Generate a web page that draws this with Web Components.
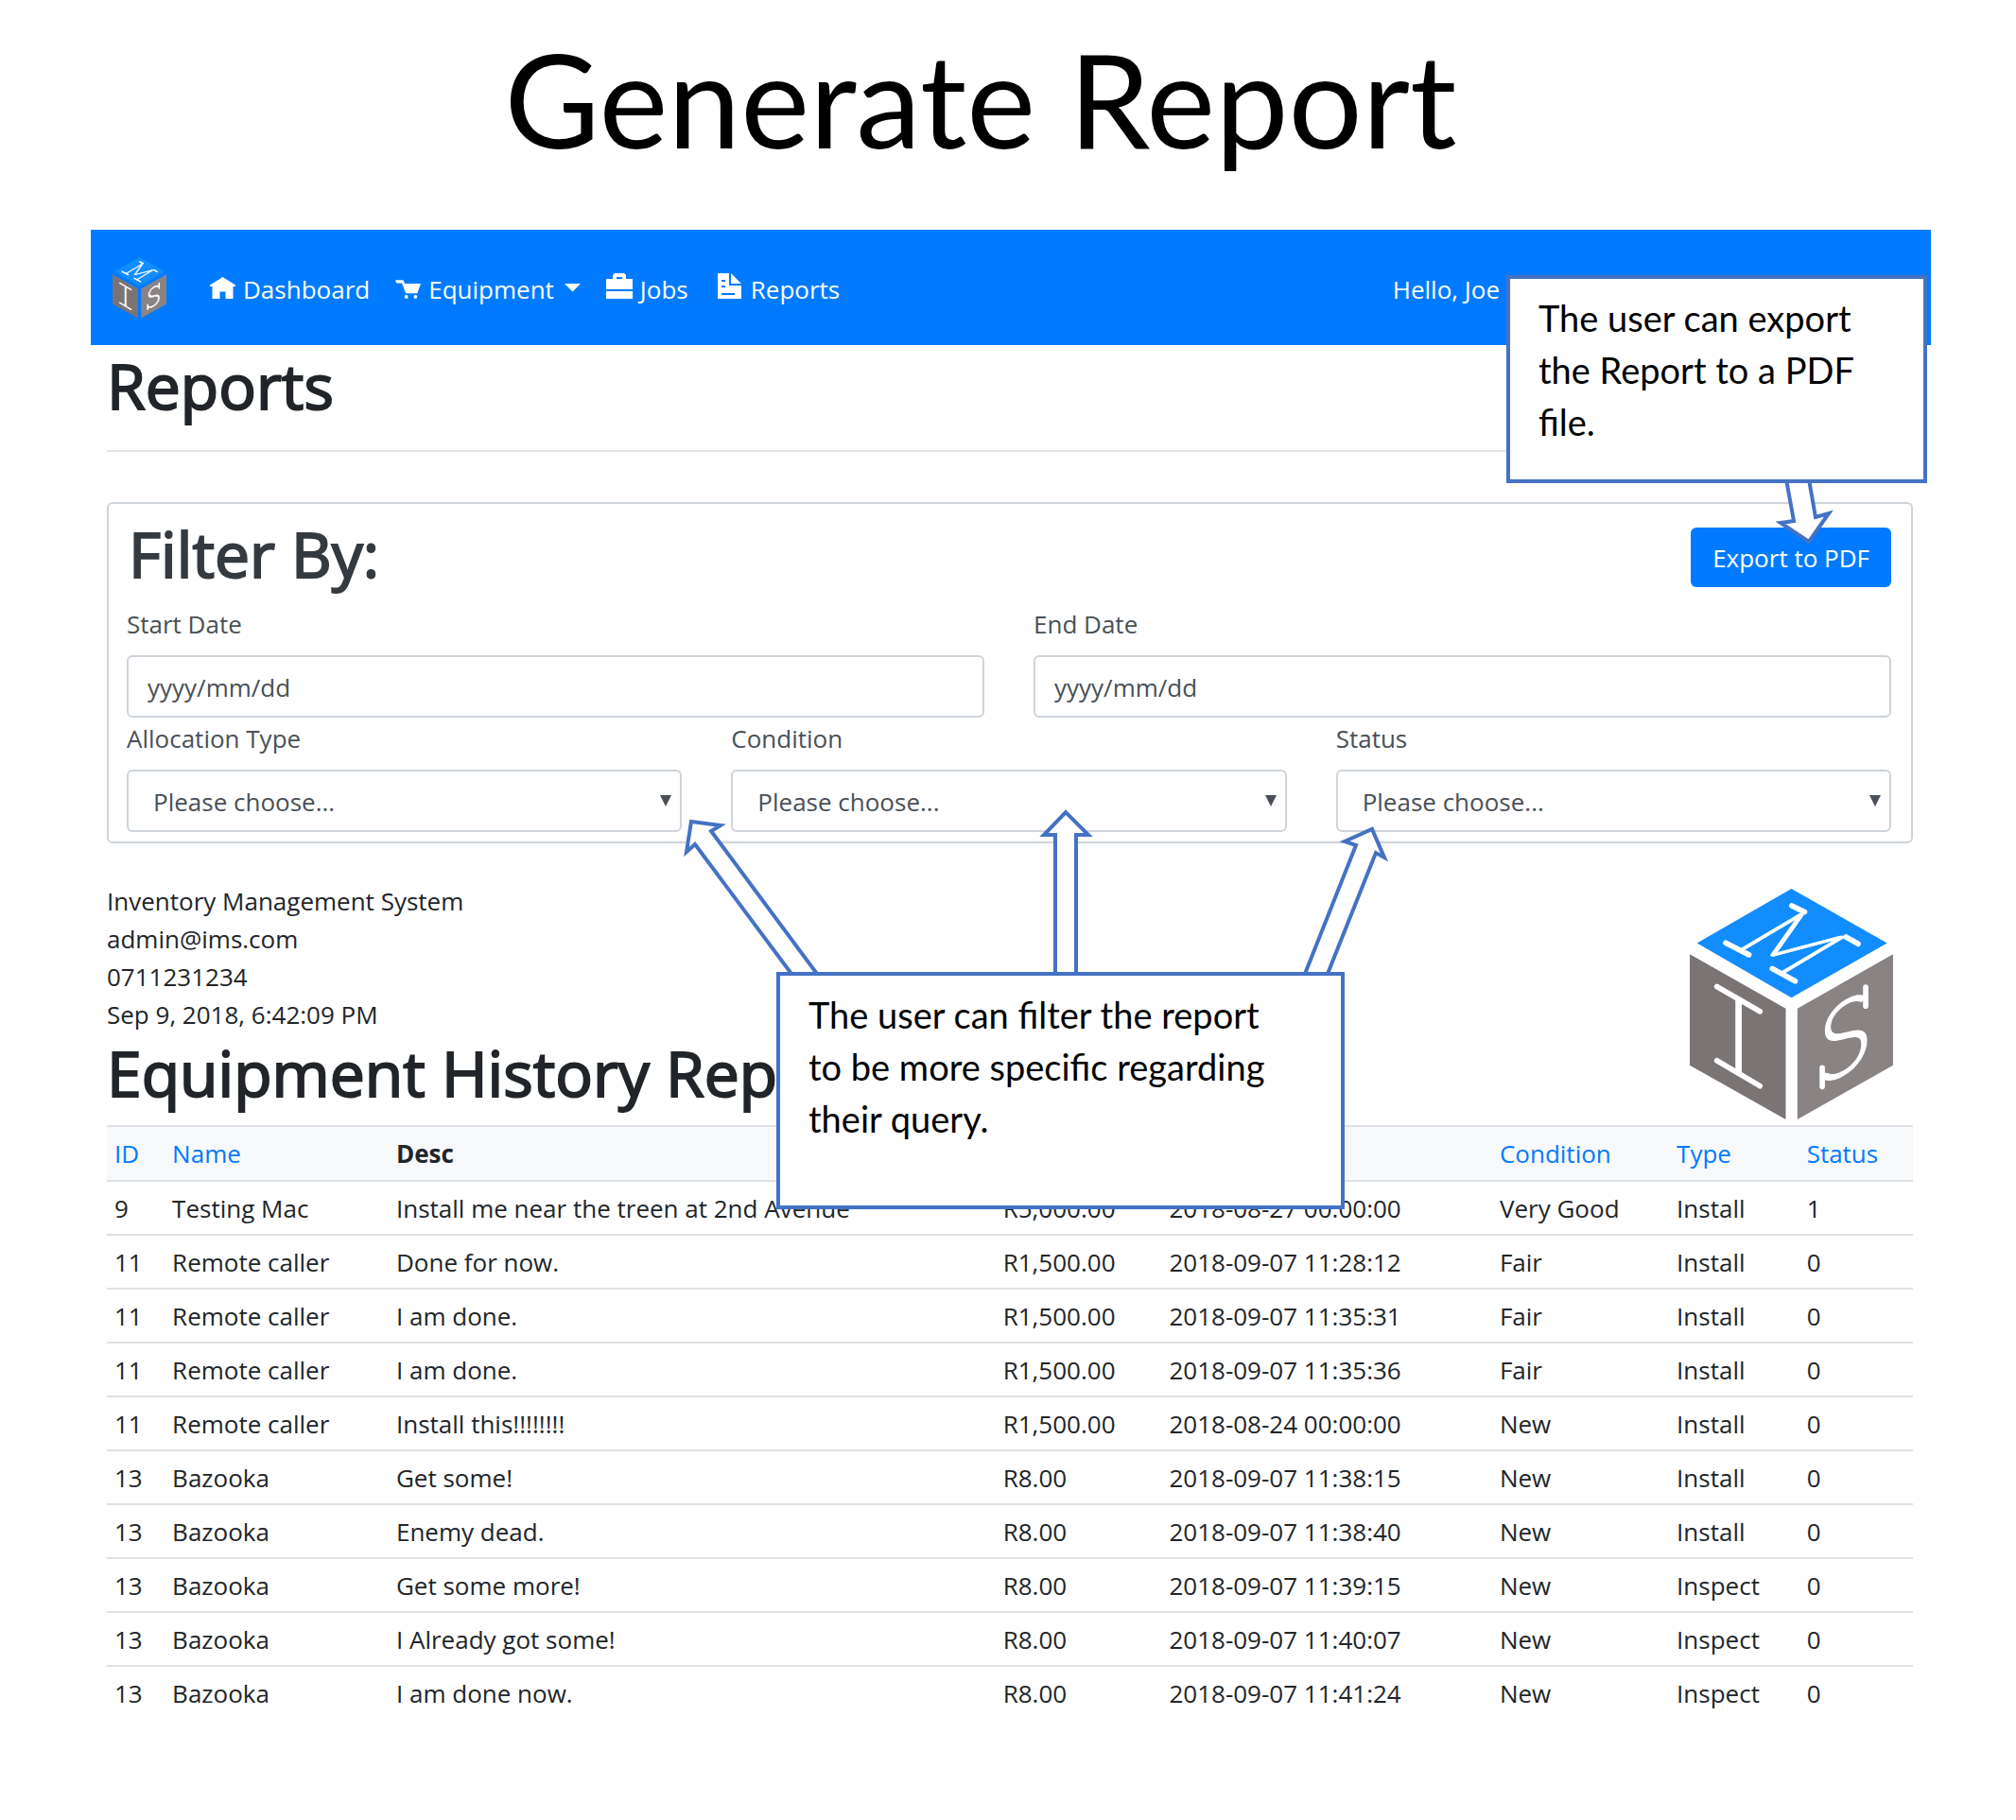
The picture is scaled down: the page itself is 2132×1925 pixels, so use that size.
<!DOCTYPE html>
<html lang="en">
<head>
<meta charset="utf-8">
<title>Generate Report</title>
<style>
  html { --blue: #007bff; --line: #dee2e6; --field: #ced4da; --note: #4472c4; }
  body { margin: 0; background: #fff; color: #212529; font: 400 26px/40px "Open Sans", "Noto Sans", sans-serif; }
</style>
</head>
<body>
<report-page></report-page>
<script>
const define = (name, html, setup) => {
  const template = document.createElement('template');
  template.innerHTML = '<style>*,*::before,*::after{box-sizing:border-box}</style>' + html;
  customElements.define(name, class extends HTMLElement {
    constructor() {
      super();
      this.attachShadow({ mode: 'open' }).append(template.content.cloneNode(true));
    }
    connectedCallback() { if (setup) setup(this, this.shadowRoot); }
  });
};

/* Cube logo; its letters lie on the faces of the cube. */
define('cube-logo', `
  <style>
    :host { display: block; aspect-ratio: 646 / 733; }
    svg { display: block; width: 100%; height: 100%; }
    text { font-family: Lato, sans-serif; font-weight: 300; fill: #fff; stroke: #fff; stroke-width: 3; text-anchor: middle; }
    g { stroke: #fff; stroke-width: 17; stroke-linecap: round; }
  </style>
  <svg viewBox="140 87 646 733" aria-hidden="true">
    <path fill="#118dff" d="M463 87 767 260 463 433 163 260Z"/>
    <path fill="#7b7475" d="M140 295 445 468V820L140 648Z"/>
    <path fill="#8a8384" d="M786 295 482 468V820L786 648Z"/>
    <text font-size="275" transform="matrix(.73 .4 -1.01 .6 365 320)">M</text>
    <text font-size="326" transform="matrix(1 .567 0 1 295 675)">I</text>
    <text font-size="326" transform="matrix(1 -.567 0 1 633 675)">S</text>
    <g>
      <path d="M254 259 328 297M402 341 475 381M464 141 505 161M636 240 675 262"/>
      <path d="M226 398 363 477M226 633 363 714"/>
      <path d="M699 400V460M561 656V716"/>
    </g>
  </svg>`);

define('nav-link', `
  <style>
    :host { display: block; }
    a { display: flex; align-items: baseline; gap: 8px; color: #fff; text-decoration: none; white-space: nowrap; }
  </style>
  <a href="#"><slot name="icon"></slot><slot></slot><slot name="caret"></slot></a>`);

define('top-nav', `
  <style>
    :host { display: block; background: var(--blue); color: #fff; }
    nav { display: flex; align-items: center; height: 122px; padding: 0 456px 0 23px; }
    cube-logo { width: 57px; margin-right: 46px; }
    ul { display: flex; gap: 27px; margin: 0; padding: 4px 0 0; list-style: none; }
    svg { fill: #fff; }
    .user { margin-left: auto; padding-top: 4px; }
  </style>
  <nav>
    <cube-logo></cube-logo>
    <ul>
      <li><nav-link><svg slot="icon" width="27" height="23" viewBox="0 0 27 23"><path d="M13.500 0 27 8.500V10H24.500V23H16.500V15.500H10.500V23H2.500V10H0V8.500Z"/></svg>Dashboard</nav-link></li>
      <li><nav-link><svg slot="icon" width="27" height="20" viewBox="0 0 29 21"><path d="M0 0H9L11 4H29L25 15H12L7.500 3.500H1.500Z"/><circle cx="12.500" cy="19" r="2"/><circle cx="23" cy="19" r="2"/></svg>Equipment<svg slot="caret" width="20" height="16" viewBox="0 0 20 16"><path d="M3 0H20L11.500 8.500Z"/></svg></nav-link></li>
      <li><nav-link><svg slot="icon" width="28" height="27" viewBox="0 0 28 27"><path fill-rule="evenodd" d="M9 0H19L21 2V6H28V17H0V6H7V2ZM11 4V6H17V4Z"/><path d="M0 19H28V27H0Z"/></svg>Jobs</nav-link></li>
      <li><nav-link><svg slot="icon" width="31" height="27" viewBox="-4 0 31 27"><path fill-rule="evenodd" d="M0 0H12V13H25V27H0ZM4 7V9H8V7ZM4 13V15H8V13ZM4 21V23H18V21Z"/><path d="M14 0 25 11H14Z"/></svg>Reports</nav-link></li>
    </ul>
    <span class="user">Hello, Joe</span>
  </nav>`);

define('date-field', `
  <style>
    :host { display: block; color: #495057; }
    label { display: block; margin-bottom: 13px; }
    input { display: block; width: 100%; height: 66px; padding: 2px 20px 0; border: 2px solid var(--field); border-radius: 6px;
      background: #fff; color: inherit; font: inherit; }
    input::placeholder { color: #495057; opacity: 1; }
  </style>
  <label for="date"></label>
  <input id="date" type="text" placeholder="yyyy/mm/dd">`,
  (host, root) => { root.querySelector('label').textContent = host.getAttribute('label'); });

define('choice-field', `
  <style>
    :host { display: block; color: #495057; }
    label { display: block; margin-bottom: 13px; }
    div { display: grid; align-items: center; }
    select, svg { grid-area: 1 / 1; }
    select { appearance: none; width: 100%; height: 66px; padding: 2px 26px 0; border: 2px solid var(--field); border-radius: 6px;
      background: #fff; color: inherit; font: inherit; }
    svg { justify-self: end; margin-right: 11px; fill: #495057; pointer-events: none; }
  </style>
  <label for="choice"></label>
  <div>
    <select id="choice"><option>Please choose...</option></select>
    <svg width="12" height="12" viewBox="0 0 12 12"><path d="M0 0H12L6 12Z"/></svg>
  </div>`,
  (host, root) => { root.querySelector('label').textContent = host.getAttribute('label'); });

define('filter-card', `
  <style>
    :host { display: block; padding: 12px 21px 10px 19px; border: 2px solid var(--field); border-radius: 6px; }
    header { display: flex; justify-content: space-between; align-items: flex-start; margin-bottom: 15px; }
    h2 { margin: 0; padding-left: 2px; color: #343a40; font-size: 66px; line-height: 80px; font-weight: 500; -webkit-text-stroke: 2px; }
    button { height: 63px; margin-top: 13px; padding: 0 23px; border: 0; border-radius: 6px; background: var(--blue); color: #fff; font: inherit; }
    .row { display: grid; grid-auto-flow: column; grid-auto-columns: 1fr; gap: 52px; }
    .row + .row { margin-top: 2px; }
  </style>
  <header><h2>Filter By:</h2><button type="button">Export to PDF</button></header>
  <div class="row"><date-field label="Start Date"></date-field><date-field label="End Date"></date-field></div>
  <div class="row"><choice-field label="Allocation Type"></choice-field><choice-field label="Condition"></choice-field><choice-field label="Status"></choice-field></div>`);

define('report-head', `
  <style>
    :host { display: flex; justify-content: space-between; align-items: flex-end; padding-bottom: 6px; }
    address { font-style: normal; }
    p { margin: 0; }
    h2 { margin: 1px 0 10px; font-size: 66px; line-height: 80px; font-weight: 500; -webkit-text-stroke: 2px; white-space: nowrap; }
    cube-logo { width: 215px; margin-right: 21px; }
  </style>
  <div>
    <address><p>Inventory Management System</p><p>admin@ims.com</p><p>0711231234</p><p>Sep 9, 2018, 6:42:09 PM</p></address>
    <h2>Equipment History Report</h2>
  </div>
  <cube-logo></cube-logo>`);

const rows = [
  ['9', 'Testing Mac', 'Install me near the treen at 2nd Avenue', 'R5,000.00', '2018-08-27 00:00:00', 'Very Good', 'Install', '1'],
  ['11', 'Remote caller', 'Done for now.', 'R1,500.00', '2018-09-07 11:28:12', 'Fair', 'Install', '0'],
  ['11', 'Remote caller', 'I am done.', 'R1,500.00', '2018-09-07 11:35:31', 'Fair', 'Install', '0'],
  ['11', 'Remote caller', 'I am done.', 'R1,500.00', '2018-09-07 11:35:36', 'Fair', 'Install', '0'],
  ['11', 'Remote caller', 'Install this!!!!!!!!', 'R1,500.00', '2018-08-24 00:00:00', 'New', 'Install', '0'],
  ['13', 'Bazooka', 'Get some!', 'R8.00', '2018-09-07 11:38:15', 'New', 'Install', '0'],
  ['13', 'Bazooka', 'Enemy dead.', 'R8.00', '2018-09-07 11:38:40', 'New', 'Install', '0'],
  ['13', 'Bazooka', 'Get some more!', 'R8.00', '2018-09-07 11:39:15', 'New', 'Inspect', '0'],
  ['13', 'Bazooka', 'I Already got some!', 'R8.00', '2018-09-07 11:40:07', 'New', 'Inspect', '0'],
  ['13', 'Bazooka', 'I am done now.', 'R8.00', '2018-09-07 11:41:24', 'New', 'Inspect', '0'],
];

define('report-table', `
  <style>
    :host { display: block; }
    table { width: 100%; table-layout: fixed; border-spacing: 0; }
    th, td { height: 57px; padding: 0 8px; border-top: 2px solid var(--line); text-align: left; white-space: nowrap; }
    th { height: 58px; background: #f8f9fa; font-weight: 700; }
    a { color: var(--blue); font-weight: 400; text-decoration: none; }
  </style>
  <table>
    <colgroup><col style="width:3.2%"><col style="width:12.4%"><col style="width:33.6%"><col style="width:9.2%"><col style="width:18.3%"><col style="width:9.8%"><col style="width:7.2%"><col style="width:6.3%"></colgroup>
    <thead><tr><th><a href="#">ID</a></th><th><a href="#">Name</a></th><th>Desc</th><th></th><th></th><th><a href="#">Condition</a></th><th><a href="#">Type</a></th><th><a href="#">Status</a></th></tr></thead>
    <tbody></tbody>
  </table>`,
  (host, root) => {
    const body = root.querySelector('tbody');
    for (const row of rows) {
      const tr = body.insertRow();
      for (const value of row) tr.insertCell().textContent = value;
    }
  });

/* Note box with block arrows; arrow points count from the top left of the box. */
define('callout-note', `
  <style>
    :host { display: block; position: absolute; color: #000; font: 400 38px/55px Lato, sans-serif; }
    svg { position: absolute; left: 0; top: 0; width: 1px; height: 1px; overflow: visible; fill: #fff; stroke: var(--note); stroke-width: 4; }
    div { position: relative; height: 100%; padding: 14px 50px 0 30px; border: 4px solid var(--note); background: #fff; }
  </style>
  <svg aria-hidden="true"></svg>
  <div><slot></slot></div>`,
  (host, root) => {
    root.querySelector('svg').innerHTML = host.getAttribute('arrows').split(';').map(p => '<polygon points="' + p + '"/>').join('');
  });

define('report-page', `
  <style>
    :host { display: block; }
    .title { margin: 0; padding: 24px 58px 59px 0; color: #000; font: 400 138px/160px Lato, sans-serif; text-align: center; }
    main { position: relative; margin: 0 90px 0 96px; padding-bottom: 80px; }
    .content { padding: 2px 19px 0 17px; }
    .content h1 { margin: 0; font-size: 66px; line-height: 80px; font-weight: 500; -webkit-text-stroke: 2px; }
    hr { height: 2px; margin: 29px 0 53px; border: 0; background: #e5e5e5; }
    report-head { margin-top: 41px; }
    .export { right: 4px; top: 48px; width: 445px; height: 220px; }
    .filter { left: calc(50% - 248px); top: 785px; width: 601px; height: 251px; }
  </style>
  <h1 class="title">Generate Report</h1>
  <main>
    <top-nav></top-nav>
    <div class="content">
      <h1>Reports</h1>
      <hr>
      <filter-card></filter-card>
      <report-head></report-head>
      <report-table></report-table>
    </div>
    <callout-note class="export" arrows="296,216 304,260 290,262 320,282 341,252 327,256 320,216">The user can export the Report to a PDF file.</callout-note>
    <callout-note class="filter" arrows="16,2 -86,-135 -95,-127 -90,-159 -59,-155 -69,-149 43,2;295,2 295,-145 283,-145 306,-169 330,-145 317,-145 317,2;559,2 613,-134 601,-138 630,-151 643,-121 634,-126 583,2">The user can filter the report to be more specific regarding their query.</callout-note>
  </main>`);
</script>
</body>
</html>
